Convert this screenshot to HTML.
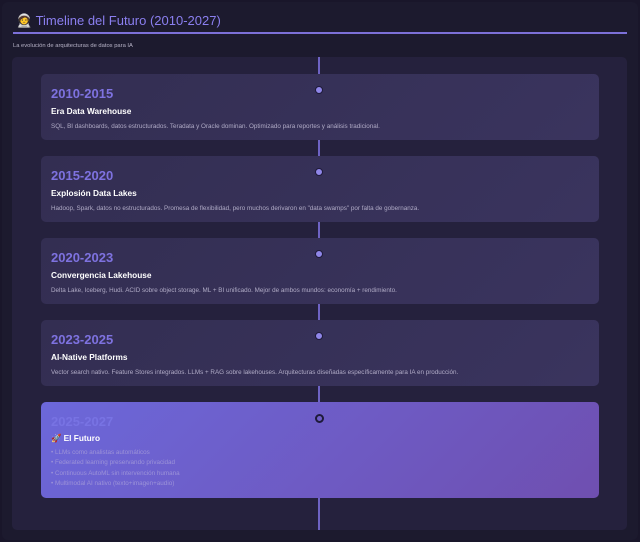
<!DOCTYPE html>
<html><head><meta charset="utf-8"><style>
*{margin:0;padding:0;box-sizing:border-box}
body{width:640px;height:542px;background:#19162a;font-family:"Liberation Sans","DejaVu Sans",sans-serif;position:relative;overflow:hidden}
.outer{position:absolute;left:2px;top:2px;width:636px;height:538px;background:#1c1a2e;border-radius:6px}
.title{position:absolute;left:16px;top:13px;font-size:13px;color:#8b7ff0}
.uline{position:absolute;left:13px;top:32px;width:614px;height:2px;background:#7c70d8}
.sub{position:absolute;left:13px;top:43px;font-size:5.8px;color:#b8b4c8}
.panel{position:absolute;left:12px;top:57px;width:615px;height:473px;background:#25213d;border-radius:5px}
.line{position:absolute;left:318px;top:57px;width:2px;height:473px;background:#6e63c4}
.card{position:absolute;left:41px;width:558px;height:66px;border-radius:5px;background:linear-gradient(135deg,#332e52,#3a345e);padding:12px 10px}
.dot{position:absolute;left:274px;top:12px;width:8px;height:8px;border-radius:50%;background:#8f86e8;border:1.5px solid #1e1a3a}
.yr{font-size:13px;font-weight:bold;color:#7e72e0;line-height:15px}
.h{font-size:8.3px;font-weight:bold;color:#fff;margin-top:5px}
.d{font-size:6.3px;color:#b0abc6;margin-top:7px}
.fut{background:linear-gradient(135deg,#6c68da,#6f4fb0);height:96px}
.fut .dot{background:transparent;border:2px solid #1e1a3a;width:9px;height:9px}
.fut .yr{color:#7873e3}
.fut .h{margin-top:4px}
.fut li{list-style:none;font-size:6.3px;color:#9c93d8;line-height:10.3px}
</style></head><body>
<div class="outer"></div>
<div class="title">🧑‍🚀 Timeline del Futuro (2010-2027)</div>
<div class="uline"></div>
<div class="sub">La evolución de arquitecturas de datos para IA</div>
<div class="panel"></div>
<div class="line"></div>
<div class="card" style="top:74px"><div class="dot"></div><div class="yr">2010-2015</div><div class="h">Era Data Warehouse</div><div class="d">SQL, BI dashboards, datos estructurados. Teradata y Oracle dominan. Optimizado para reportes y análisis tradicional.</div></div>
<div class="card" style="top:156px"><div class="dot"></div><div class="yr">2015-2020</div><div class="h">Explosión Data Lakes</div><div class="d">Hadoop, Spark, datos no estructurados. Promesa de flexibilidad, pero muchos derivaron en "data swamps" por falta de gobernanza.</div></div>
<div class="card" style="top:238px"><div class="dot"></div><div class="yr">2020-2023</div><div class="h">Convergencia Lakehouse</div><div class="d">Delta Lake, Iceberg, Hudi. ACID sobre object storage. ML + BI unificado. Mejor de ambos mundos: economía + rendimiento.</div></div>
<div class="card" style="top:320px"><div class="dot"></div><div class="yr">2023-2025</div><div class="h">AI-Native Platforms</div><div class="d">Vector search nativo. Feature Stores integrados. LLMs + RAG sobre lakehouses. Arquitecturas diseñadas específicamente para IA en producción.</div></div>
<div class="card fut" style="top:402px"><div class="dot"></div><div class="yr">2025-2027</div><div class="h">🚀 El Futuro</div><ul style="margin-top:4px"><li>• LLMs como analistas automáticos</li><li>• Federated learning preservando privacidad</li><li>• Continuous AutoML sin intervención humana</li><li>• Multimodal AI nativo (texto+imagen+audio)</li></ul></div>
</body></html>
